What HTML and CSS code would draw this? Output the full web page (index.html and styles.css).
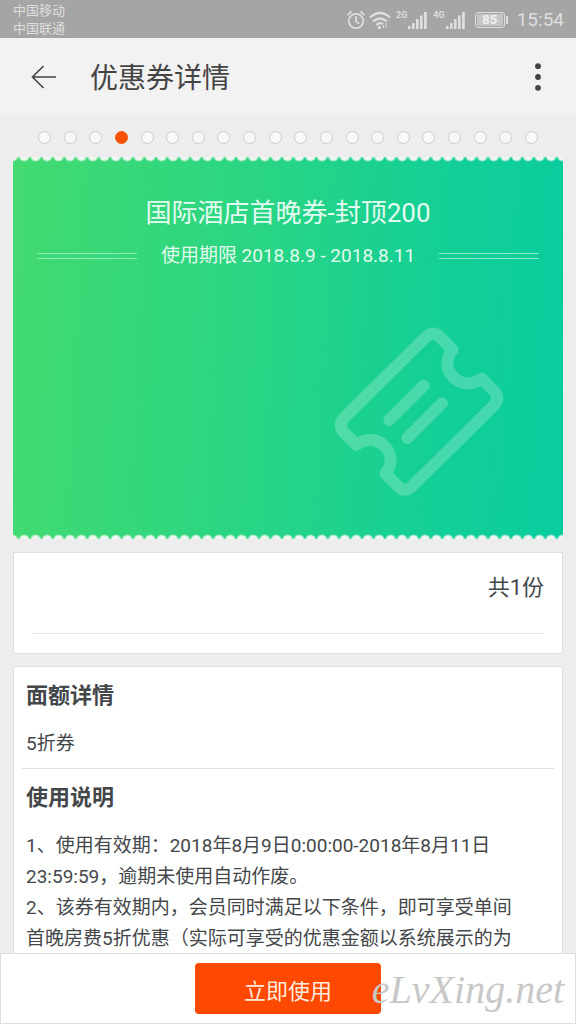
FILE: index.html
```html
<!DOCTYPE html>
<html lang="zh-CN">
<head>
<meta charset="utf-8">
<meta name="viewport" content="width=device-width, initial-scale=1">
<title>优惠券详情</title>
<link rel="stylesheet" href="styles.css">
</head>
<body>
<div class="screen">
  <div class="status">
    <div class="carriers"><span>中国移动</span><span>中国联通</span></div>
    <div class="indicators">
      <svg class="alarm" viewBox="0 0 18 20" width="18" height="20" fill="none" stroke="currentColor" stroke-width="1.8" stroke-linecap="round"><circle cx="9" cy="11" r="7.2"/><path d="M9 7v4.4l2.6 1.8M1 4.600 4 2M17 4.600 14 2"/></svg>
      <svg class="wifi" viewBox="0 0 22 20" width="22" height="20" fill="none" stroke="currentColor" stroke-width="2.200"><path d="M1 7.500Q11-1.500 21 7.500M4 11.500Q11 5.500 18 11.500M7 15Q10.500 12 14 14"/><circle cx="10.500" cy="17.500" r="1.700" fill="currentColor" stroke="none"/><path d="M17 13v5M14.500 15v3" stroke-width="1"/></svg>
      <div class="signal"><span>2G</span>
        <svg viewBox="0 0 20 20" width="20" height="20" fill="currentColor"><path d="M0 16h2.600v3H0zM4 13h2.600v6H4zM8 9h2.600v10H8zM12 5.500h2.600V19H12zM16 2h2.800v17H16z"/></svg></div>
      <div class="signal"><span>4G</span>
        <svg viewBox="0 0 20 20" width="20" height="20" fill="currentColor"><path d="M0 16h2.600v3H0zM4 13h2.600v6H4zM8 9h2.600v10H8zM12 5.500h2.600V19H12zM16 2h2.800v17H16z"/></svg></div>
      <div class="battery"><span>85</span></div>
      <time class="clock">15:54</time>
    </div>
  </div>

  <header class="header">
    <button class="icon-button" type="button" aria-label="返回">
      <svg viewBox="0 0 26 24" width="26" height="24" fill="none" stroke="currentColor" stroke-width="1.600"><path d="M25 12H1.500M12.500 1 1.500 12l11 11"/></svg>
    </button>
    <h1>优惠券详情</h1>
    <button class="icon-button" type="button" aria-label="更多">
      <svg viewBox="0 0 26 28" width="26" height="28" fill="currentColor"><circle cx="13" cy="3.200" r="2.900"/><circle cx="13" cy="14" r="2.900"/><circle cx="13" cy="24.800" r="2.900"/></svg>
    </button>
  </header>

  <main class="content">
    <nav class="dots" aria-label="优惠券">
      <button type="button" aria-label="1"></button><button type="button" aria-label="2"></button><button type="button" aria-label="3"></button><button type="button" aria-label="4" class="active" aria-current="true"></button><button type="button" aria-label="5"></button><button type="button" aria-label="6"></button><button type="button" aria-label="7"></button><button type="button" aria-label="8"></button><button type="button" aria-label="9"></button><button type="button" aria-label="10"></button><button type="button" aria-label="11"></button><button type="button" aria-label="12"></button><button type="button" aria-label="13"></button><button type="button" aria-label="14"></button><button type="button" aria-label="15"></button><button type="button" aria-label="16"></button><button type="button" aria-label="17"></button><button type="button" aria-label="18"></button><button type="button" aria-label="19"></button><button type="button" aria-label="20"></button>
    </nav>

    <section class="ticket">
      <h2>国际酒店首晚券-封顶200</h2>
      <p class="period"><span>使用期限 2018.8.9 - 2018.8.11</span></p>
      <svg class="ticket-mark" viewBox="42 52 510 510" width="170" height="170" fill="none" stroke="#fff" stroke-width="36" stroke-linejoin="round" stroke-linecap="round"><path d="M320 80Q341 64 360 82L398 121C350 174 420 254 485 207L523 245Q540 265 522 287L274 532Q253 550 234 530L196 491C244 438 174 358 109 405L71 367Q54 347 72 325Z"/><path d="M208 331 311 228M262 385 366 281"/></svg>
    </section>

    <section class="card count"><p>共1份</p></section>

    <section class="card details">
      <div class="block">
        <h3>面额详情</h3>
        <p>5折券</p>
      </div>
      <div class="block">
        <h3>使用说明</h3>
        <p>1、使用有效期：2018年8月9日0:00:00-2018年8月11日23:59:59，逾期未使用自动作废。</p>
        <p>2、该券有效期内，会员同时满足以下条件，即可享受单间首晚房费5折优惠（实际可享受的优惠金额以系统展示的为</p>
      </div>
    </section>
  </main>

  <footer class="footer">
    <button class="use" type="button">立即使用</button>
    <span class="watermark">eLvXing.net</span>
  </footer>
</div>
</body>
</html>
```
FILE: styles.css
```css
*, *::before, *::after { box-sizing: border-box; }
body {
  margin: 0;
  font-family: Roboto, "Noto Sans CJK SC", sans-serif;
  color: #444749;
  background: #ededed;
}
h1, h2, h3, p { margin: 0; font-weight: 400; }
button { border: 0; padding: 0; background: none; color: inherit; font: inherit; }
svg { display: block; }

.screen { display: flex; flex-direction: column; height: 100vh; }

.status {
  display: flex;
  justify-content: space-between;
  align-items: center;
  height: 38px;
  padding: 2px 12px 0 13px;
  background: #a5a5a5;
  color: #dedede;
}
.carriers { display: flex; flex-direction: column; font-size: 13px; line-height: 18px; }
.indicators { display: flex; align-items: center; gap: 5px; }
.alarm { margin-right: -1px; }
.signal { display: flex; align-items: flex-start; gap: 1px; }
.signal span { font-size: 9px; line-height: 10px; font-weight: 700; }
.battery {
  position: relative;
  width: 30px;
  height: 16px;
  margin: 0 7px 0 4px;
  padding: 1px;
  border: 1px solid #dedede;
  border-radius: 3px;
}
.battery::after {
  content: "";
  position: absolute;
  top: 3px;
  right: -4px;
  width: 2px;
  height: 8px;
  background: #dedede;
}
.battery span {
  display: block;
  background: #c6c6c6;
  color: #f0f0f0;
  font-size: 13px;
  line-height: 12px;
  font-weight: 700;
  text-align: center;
}
.clock { font-size: 19px; line-height: 24px; }

.header {
  display: flex;
  align-items: center;
  height: 77px;
  padding: 0 25px 0 31px;
  background: #f2f2f2;
  color: #444;
}
.header h1 { flex: 1; margin-left: 33px; padding-top: 5px; font-size: 28px; line-height: 40px; }

.content { flex: 1; min-height: 0; overflow: hidden; padding: 0 13px; }

.dots { display: flex; justify-content: space-between; padding: 16px 25px 13px; }
.dots button {
  width: 13px;
  height: 13px;
  border: 1px solid #cdcdcd;
  border-radius: 50%;
  background: #f8f8f8;
}
.dots .active { border-color: #f95108; background: #f95108; }

.ticket {
  position: relative;
  height: 382px;
  padding: 39px 24px 0;
  color: #e2fbef;
  text-align: center;
  background:
    radial-gradient(circle at 50% -1px, #edf6f1 4px, transparent 6px) -6px 0 / calc(100% / 48) 6px repeat-x,
    radial-gradient(circle at 50% 7px, #edf6f1 4px, transparent 6px) -6px 100% / calc(100% / 48) 6px repeat-x,
    linear-gradient(93deg, #43da70, #28d584 45%, #14cf96 75%, #09cc9e);
}
.ticket h2 { font-size: 26px; line-height: 34px; }
.period {
  display: flex;
  align-items: center;
  gap: 24px;
  margin-top: 13px;
  font-size: 19px;
  line-height: 26px;
}
.period::before, .period::after {
  content: "";
  flex: 1;
  height: 6px;
  border: solid #91eabd;
  border-width: 1px 0;
}
.ticket-mark { position: absolute; right: 59px; bottom: 42px; opacity: .22; }

.card { margin-top: 13px; border: 1px solid #e0e0e0; background: #fff; }
.count { padding: 19px 18px 19px; }
.count p {
  padding-bottom: 29px;
  border-bottom: 1px solid #e3e3e3;
  text-align: right;
  font-size: 22px;
  line-height: 32px;
}
.details { margin-top: 12px; padding: 0 8px; }
.block { padding: 13px 30px 9px 4px; }
.block + .block { border-top: 1px solid #e0e0e0; }
.block h3 { margin-bottom: 16px; font-size: 22px; line-height: 32px; font-weight: 700; }
.block p { font-size: 19px; line-height: 31px; }

.footer {
  position: relative;
  display: flex;
  justify-content: center;
  padding: 9px 0;
  border: 1px solid #dedede;
  background: #fff;
}
.use {
  width: 186px;
  height: 51px;
  border-radius: 4px;
  background: #ff4800;
  color: #ffeadb;
  font-size: 22px;
}
.watermark {
  position: absolute;
  right: 11px;
  top: 14px;
  color: #c8c8c8;
  font: italic 40px/44px "Liberation Serif", serif;
}
```
